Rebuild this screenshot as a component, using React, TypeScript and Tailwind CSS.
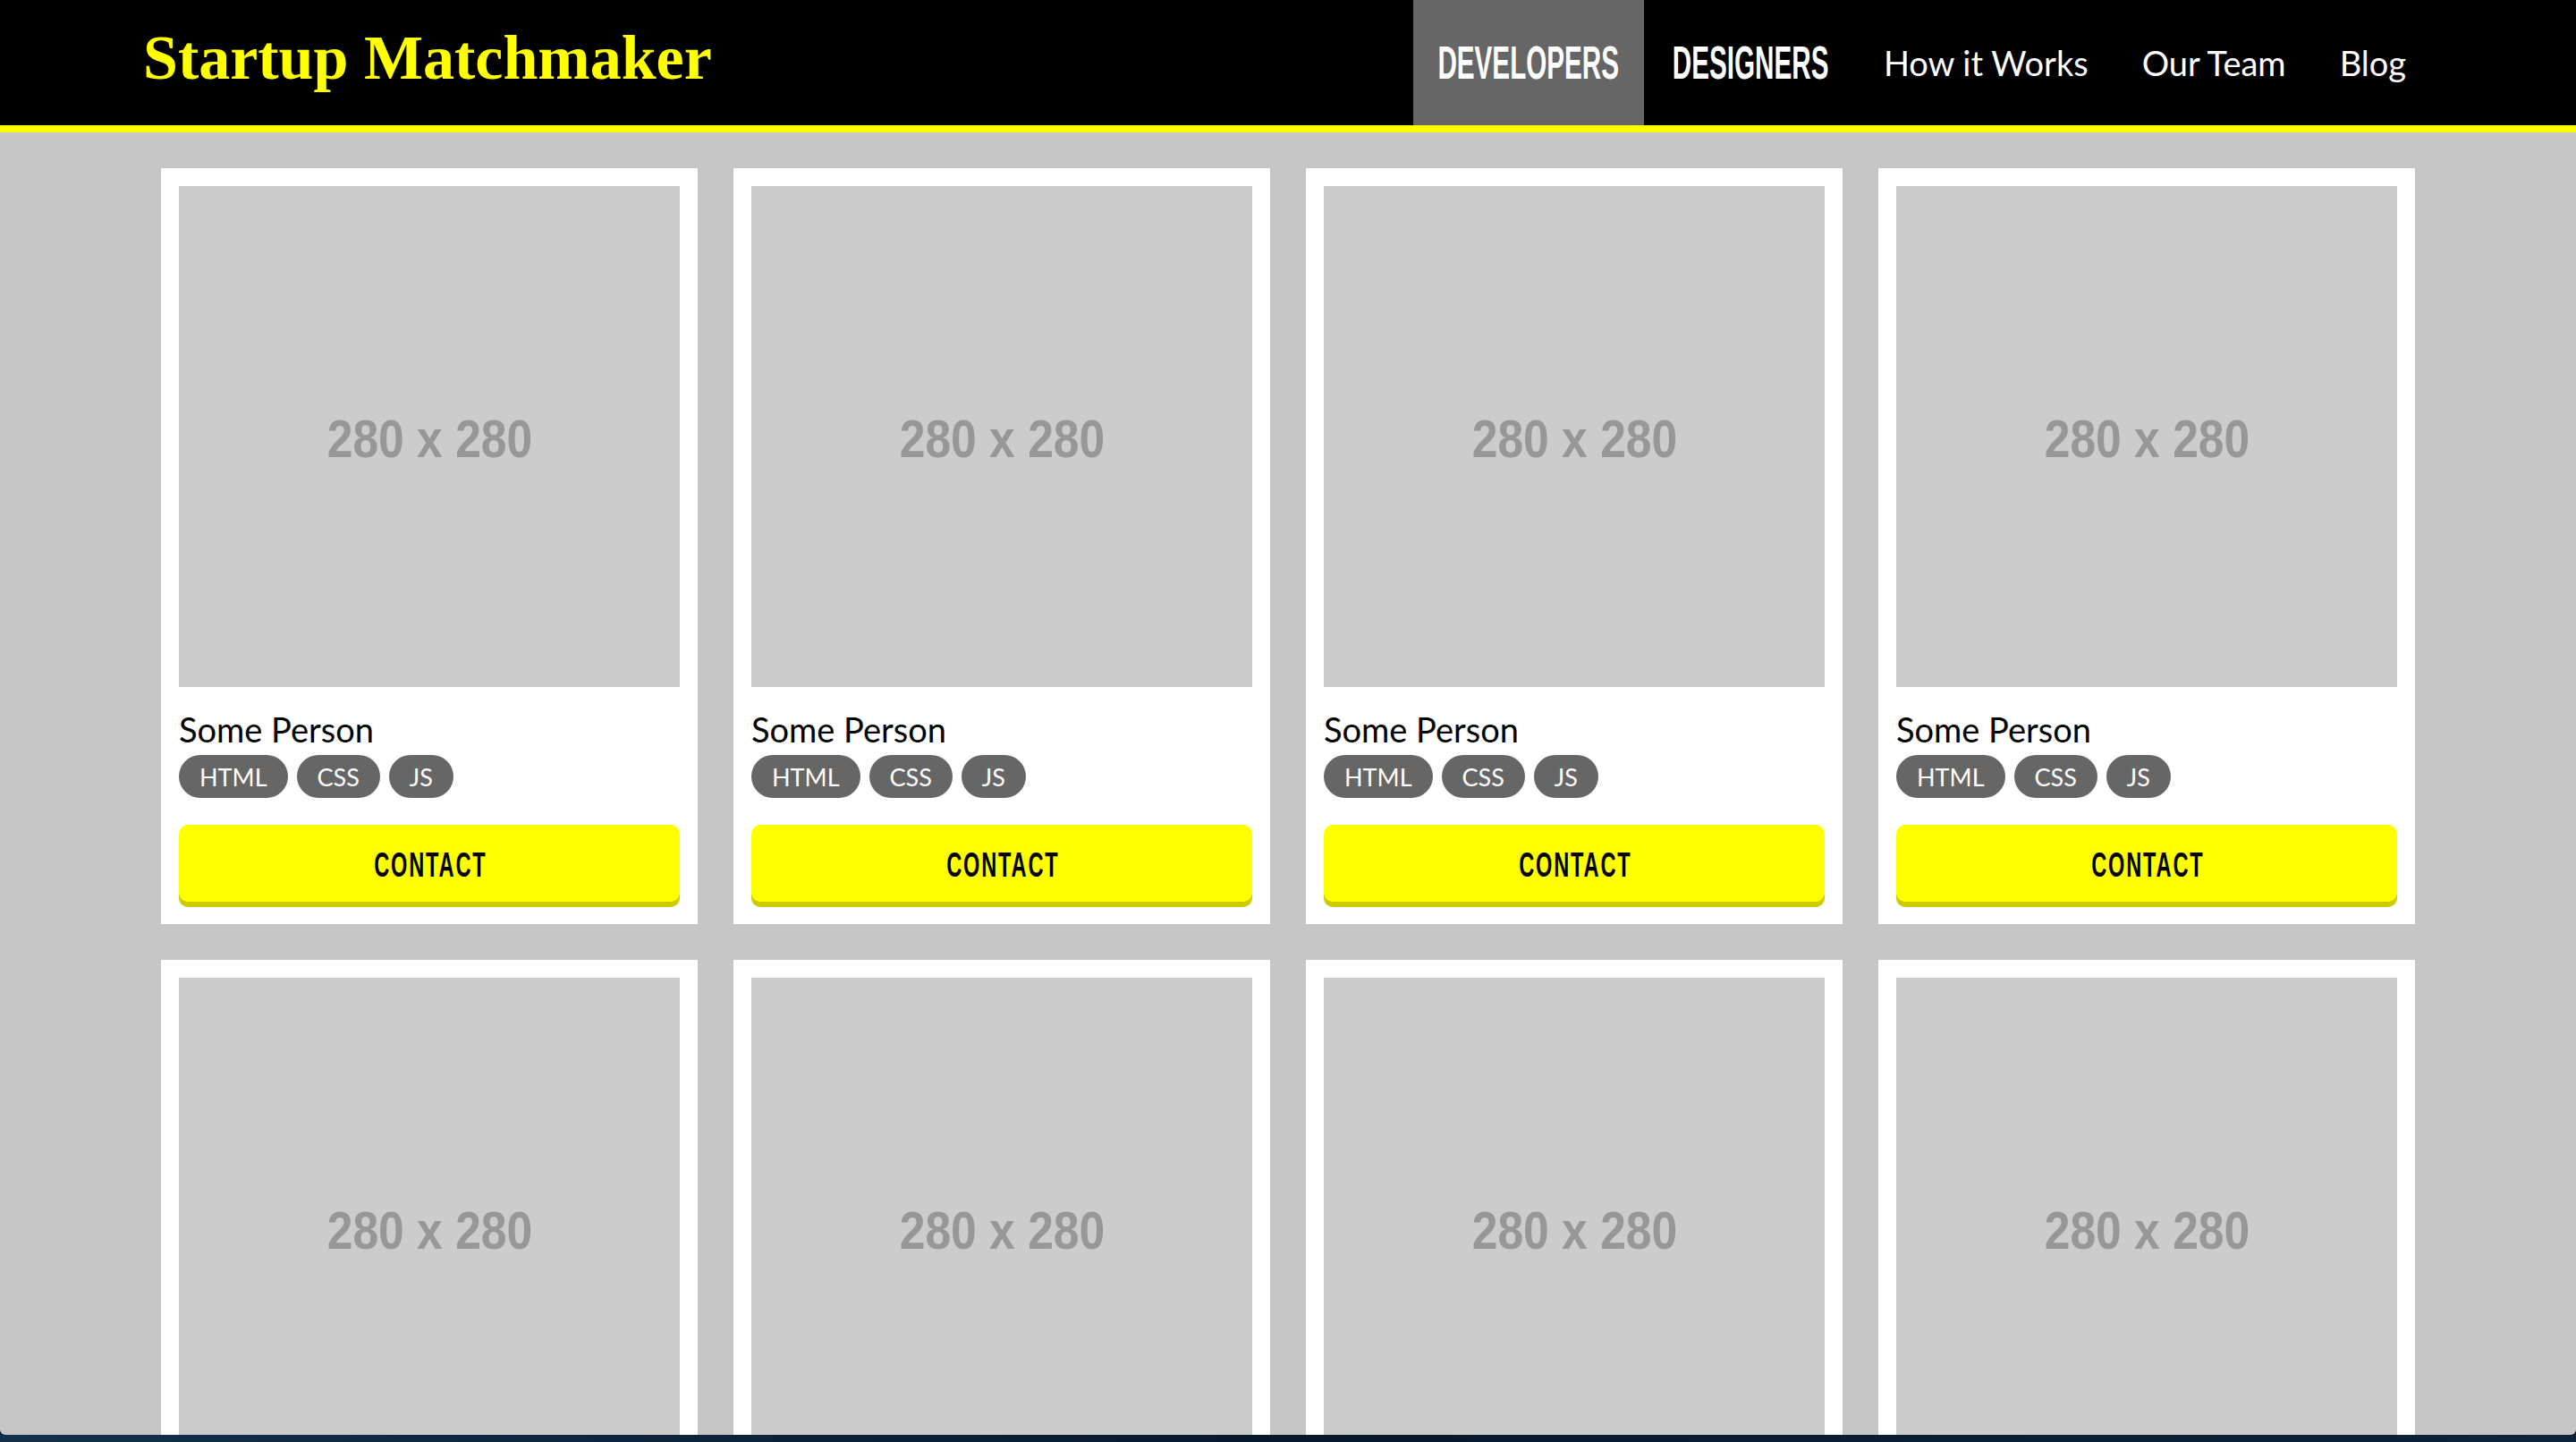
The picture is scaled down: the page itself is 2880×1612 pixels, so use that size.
import React from "react";

function Card() {
  return (
    <div className="flex flex-col bg-white p-[20px] pb-[25px]">
      <div className="flex h-[560px] w-[560px] items-center justify-center overflow-hidden bg-[#cccccc]">
        <span className="mt-[6px] inline-block scale-x-[0.86] whitespace-nowrap font-['Liberation_Sans',sans-serif] text-[60px] font-bold leading-none text-[#979797]">
          280 x 280
        </span>
      </div>
      <div className="mt-[27px] flex h-[40px] items-center font-['Lato',sans-serif] text-[38px] leading-none text-black">
        Some Person
      </div>
      <div className="mt-[9px] flex h-[48px] gap-[10px]">
        {["HTML", "CSS", "JS"].map((t) => (
          <span
            key={t}
            className="flex h-[48px] items-center rounded-full bg-[#666666] px-[23px] font-['Lato',sans-serif] text-[27px] leading-none text-white"
          >
            {t}
          </span>
        ))}
      </div>
      <button className="mt-[30px] flex h-[86px] w-full items-center justify-center overflow-visible rounded-[10px] bg-[#ffff00] shadow-[0_6px_0_#cccc00]">
        <span className="mt-[4px] inline-block scale-x-[0.62] whitespace-nowrap pl-[3px] font-['Liberation_Sans',sans-serif] text-[38px] font-bold leading-none tracking-[3px] text-black">
          CONTACT
        </span>
      </button>
    </div>
  );
}

export default function App() {
  return (
    <div className="flex h-[1612px] w-[2880px] flex-col overflow-hidden bg-[#0b1b2e]">
      <div className="flex flex-1 flex-col overflow-hidden rounded-b-[6px] bg-[#c6c6c6]">
        <header className="h-[148px] shrink-0 border-b-[8px] border-[#ffff00] bg-black">
          <div className="mx-auto flex h-[140px] w-[2560px] items-stretch justify-between">
            <div className="flex items-center pb-[10px]">
              <span className="font-['Liberation_Serif',serif] text-[70px] font-bold leading-none text-[#ffff00]">
                Startup Matchmaker
              </span>
            </div>
            <nav className="flex items-stretch">
              <a className="flex w-[258px] items-center justify-center bg-[#666666]">
                <span className="inline-block scale-x-[0.57] whitespace-nowrap font-['Liberation_Sans',sans-serif] text-[52px] font-bold leading-none text-white">
                  DEVELOPERS
                </span>
              </a>
              <a className="flex w-[238px] items-center justify-center">
                <span className="inline-block scale-x-[0.57] whitespace-nowrap font-['Liberation_Sans',sans-serif] text-[52px] font-bold leading-none text-white">
                  DESIGNERS
                </span>
              </a>
              <a className="flex items-center px-[30px] font-['Lato',sans-serif] text-[38px] leading-none text-white">
                How it Works
              </a>
              <a className="flex items-center px-[30px] font-['Lato',sans-serif] text-[38px] leading-none text-white">
                Our Team
              </a>
              <a className="flex items-center px-[30px] font-['Lato',sans-serif] text-[38px] leading-none text-white">
                Blog
              </a>
            </nav>
          </div>
        </header>
        <main className="mx-auto mt-[40px] grid w-[2520px] grid-cols-4 gap-[40px]">
          {Array.from({ length: 8 }).map((_, i) => (
            <Card key={i} />
          ))}
        </main>
      </div>
      <div className="h-[8px] shrink-0 bg-gradient-to-r from-[#13304c] via-[#07182c] to-[#0d2239]" />
    </div>
  );
}
